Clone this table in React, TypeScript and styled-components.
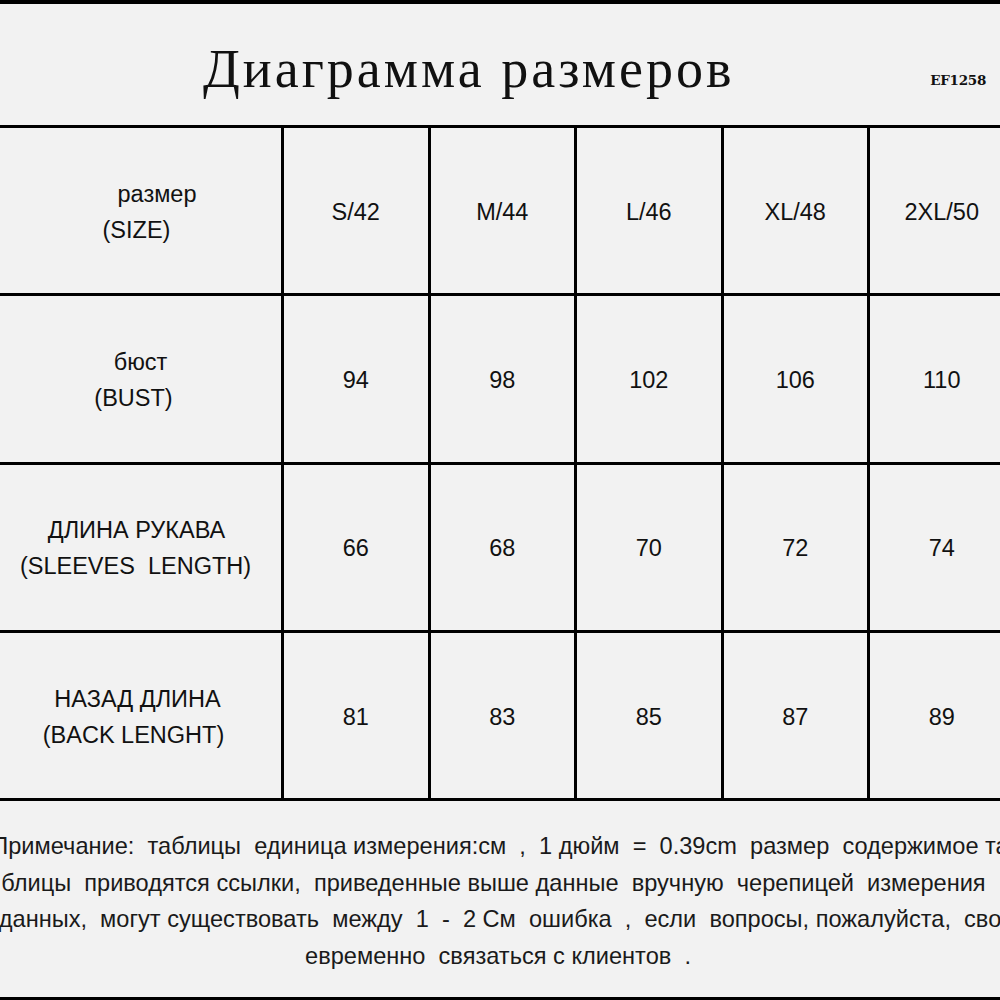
import React from "react";
import styled, { createGlobalStyle } from "styled-components";

const GlobalStyle = createGlobalStyle`
  html, body { margin: 0; padding: 0; background: #f2f2f2; }
  * { box-sizing: border-box; }
`;

const Page = styled.div`
  width: 1000px;
  height: 1000px;
  overflow: hidden;
  background: #f2f2f2;
  border-top: 4px solid #000;
  border-bottom: 3px solid #000;
  display: flex;
  flex-direction: column;
  font-family: "Liberation Sans", Arial, sans-serif;
  color: #111;
`;

const Header = styled.header`
  height: 121px;
  display: flex;
  align-items: center;
  padding-left: 203px;
  padding-right: 14px;
`;

const Title = styled.h1`
  margin: 0;
  padding-top: 8px;
  font-family: "Liberation Serif", "Times New Roman", serif;
  font-weight: normal;
  font-size: 54px;
  letter-spacing: 3px;
  color: #111;
`;

const Code = styled.span`
  margin-left: auto;
  padding-top: 30px;
  font-family: "DejaVu Serif", "Liberation Serif", serif;
  font-weight: bold;
  font-size: 13.5px;
  letter-spacing: -0.3px;
  color: #111;
`;

const Table = styled.div`
  width: 1014px;
  border-top: 3px solid #000;
`;

const Row = styled.div`
  display: grid;
  grid-template-columns: 281px repeat(5, 146.5px);
  height: 168.3px;
  border-bottom: 3px solid #000;
`;

const LabelCell = styled.div`
  display: flex;
  flex-direction: column;
  align-items: center;
  justify-content: center;
  font-size: 23.5px;
  line-height: 36px;
  padding-top: 2px;
`;

const LabelLine = styled.span<{ $shift?: number }>`
  white-space: pre;
  transform: translateX(${(p) => p.$shift ?? 0}px);
`;

const ValueCell = styled.div`
  border-left: 3px solid #000;
  display: flex;
  align-items: center;
  justify-content: center;
  font-size: 23.5px;
  padding-top: 3px;
`;

const Notes = styled.div`
  flex: 1;
  display: flex;
  flex-direction: column;
  padding-top: 27px;
  font-size: 23.6px;
  line-height: 36.5px;
  color: #1a1a1a;
`;

const NoteLine = styled.div<{ $shift?: number }>`
  display: flex;
  justify-content: center;
  white-space: pre;
  transform: translateX(${(p) => p.$shift ?? 0}px);
`;

const rows = [
  { label: ["  размер", "(SIZE)"], shifts: [10, -4], values: ["S/42", "M/44", "L/46", "XL/48", "2XL/50"] },
  { label: ["бюст", "(BUST)"], shifts: [0, -7], values: ["94", "98", "102", "106", "110"] },
  { label: ["ДЛИНА РУКАВА", "(SLEEVES  LENGTH)"], shifts: [-4, -5], values: ["66", "68", "70", "72", "74"] },
  { label: ["НАЗАД ДЛИНА", "(BACK LENGHT)"], shifts: [-3, -7], values: ["81", "83", "85", "87", "89"] },
];

const notes = [
  { text: "Примечание:  таблицы  единица измерения:см  ,  1 дюйм  =  0.39cm  размер  содержимое та", shift: 0 },
  { text: "блицы  приводятся ссылки,  приведенные выше данные  вручную  черепицей  измерения  ", shift: 0 },
  { text: "данных,  могут существовать  между  1  -  2 См  ошибка  ,  если  вопросы, пожалуйста,  сво", shift: 0 },
  { text: "евременно  связаться с клиентов  .", shift: -2 },
];

export default function App() {
  return (
    <>
      <GlobalStyle />
      <Page>
        <Header>
          <Title>Диаграмма размеров</Title>
          <Code>EF1258</Code>
        </Header>
        <Table>
          {rows.map((r, i) => (
            <Row key={i}>
              <LabelCell>
                {r.label.map((l, j) => (
                  <LabelLine key={j} $shift={r.shifts[j]}>
                    {l}
                  </LabelLine>
                ))}
              </LabelCell>
              {r.values.map((v) => (
                <ValueCell key={v}>{v}</ValueCell>
              ))}
            </Row>
          ))}
        </Table>
        <Notes>
          {notes.map((n, i) => (
            <NoteLine key={i} $shift={n.shift}>
              {n.text}
            </NoteLine>
          ))}
        </Notes>
      </Page>
    </>
  );
}
